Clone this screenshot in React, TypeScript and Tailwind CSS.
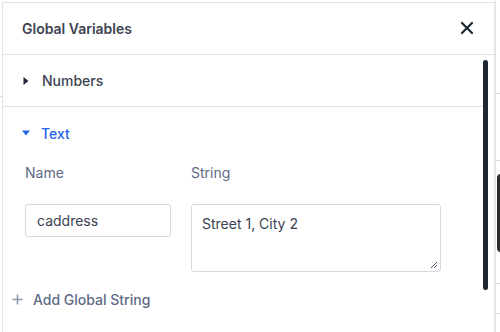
import React from "react";

const Caret = ({ open }: { open?: boolean }) => (
  <svg width="8" height="8" viewBox="0 0 8 8" className={open ? "text-[#2563eb]" : "text-[#1f2937]"}>
    {open ? <path d="M0 1.5h8L4 6.5z" fill="currentColor" /> : <path d="M1.5 0v8L6.5 4z" fill="currentColor" />}
  </svg>
);

const App = () => {
  return (
    <div className="relative h-[332px] w-[500px] overflow-hidden bg-white font-['Inter',sans-serif]">
      {/* page behind the drawer */}
      <div className="absolute left-0 top-[96px] h-px w-[3px] bg-[#d8dce2]" />
      <div className="absolute right-0 top-0 h-full w-[5px] border-l border-[#e3e6ea]">
        <div className="absolute left-0 top-[93px] h-px w-full bg-[#d8dce2]" />
        <div className="absolute left-0 top-[160px] h-px w-full bg-[#d8dce2]" />
        <div className="absolute left-[1px] top-[174px] h-[78px] w-[6px] rounded-l bg-[#2d2d2d]" />
        <div className="absolute left-0 top-[283px] h-px w-full bg-[#d8dce2]" />
        <div className="absolute left-0 top-[313px] h-px w-full bg-[#d8dce2]" />
      </div>

      <div className="absolute left-[2px] top-[2px] flex h-[340px] w-[493px] flex-col border border-[#dfe2e7] bg-white">
        <header className="flex h-[52px] shrink-0 items-center justify-between border-b border-[#dfe2e7] pl-[19px] pr-[20px]">
          <div className="text-[14px] font-semibold text-[#3d4451]">Global Variables</div>
          <svg width="14" height="14" viewBox="0 0 14 14" className="mt-[-2px]">
            <path d="M2 2l10 10M12 2L2 12" stroke="#1f2937" strokeWidth="2.2" strokeLinecap="round" />
          </svg>
        </header>

        <div className="flex flex-1">
          <div className="w-[480px]">
            <div className="flex h-[52px] items-center gap-[12px] border-b border-[#dfe2e7] pl-[19px]">
              <Caret />
              <span className="text-[14px] font-medium text-[#3d4451]">Numbers</span>
            </div>
            <div className="flex h-[51px] items-center gap-[11px] pl-[19px] pt-[1px]">
              <Caret open />
              <span className="text-[14px] font-medium text-[#2563eb]">Text</span>
            </div>
            <div className="flex gap-[20px] pl-[22px]">
              <div className="flex w-[146px] flex-col">
                <div className="mt-[5px] h-[20px] text-[14px] leading-[20px] text-[#5e6a85]">Name</div>
                <div className="mt-[21px] flex h-[33px] items-center rounded-[3px] border border-[#d5d9e0] px-[11px] text-[14px] text-[#374151]">
                  caddress
                </div>
              </div>
              <div className="flex w-[250px] flex-col">
                <div className="mt-[5px] h-[20px] text-[14px] leading-[20px] text-[#5e6a85]">String</div>
                <div className="relative mt-[21px] h-[68px] rounded-[3px] border border-[#d5d9e0] px-[10px] pt-[8px] text-[14px] text-[#374151]">
                  Street 1, City 2
                  <svg width="8" height="8" viewBox="0 0 8 8" className="absolute bottom-[2px] right-[2px]">
                    <path d="M7 1L1 7M7 4L4 7" stroke="#4b5563" strokeWidth="1" />
                  </svg>
                </div>
              </div>
            </div>
            <div className="mt-[17px] flex items-center gap-[10px] pl-[9px]">
              <svg width="11" height="11" viewBox="0 0 11 11">
                <path d="M5.5 0.5v10M0.5 5.5h10" stroke="#8a94a8" strokeWidth="1.5" />
              </svg>
              <span className="text-[14px] font-medium text-[#5e6a85]">Add Global String</span>
            </div>
          </div>
          <div className="flex w-[11px] justify-start pt-[5px]">
            <div className="h-[230px] w-[5px] rounded-full bg-[#1f2733]" />
          </div>
        </div>
      </div>
    </div>
  );
};

export default App;
